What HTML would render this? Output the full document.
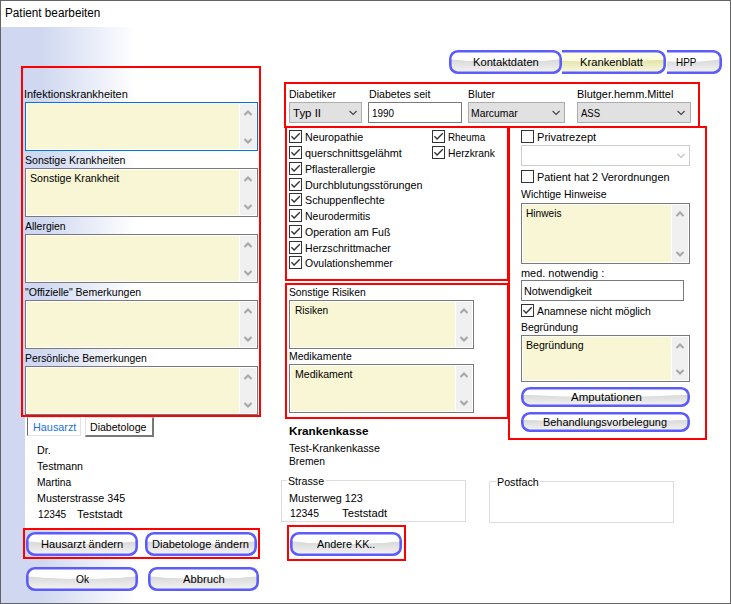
<!DOCTYPE html>
<html><head><meta charset="utf-8"><title>Patient bearbeiten</title><style>
html,body{margin:0;padding:0;width:731px;height:604px;overflow:hidden;background:#fff}
#win{position:absolute;left:0;top:0;width:729px;height:602px;border:1px solid #646464;background:#fff;overflow:hidden}
#body{position:absolute;left:0;top:26px;width:729px;height:576px;background:linear-gradient(to right,#cfd8f0 0px,#cfd8f0 40px,#ffffff 135px)}
#root{position:absolute;left:0;top:0;width:731px;height:604px}
#root>div{position:absolute}
.t{position:absolute;font-family:"Liberation Sans", sans-serif;font-size:11px;line-height:13px;white-space:pre;color:#000;transform-origin:0 0}
.tb{position:absolute;border:1px solid #7a7a7a;background:#fff}
.tb>div{position:absolute}
.ty{background:#f8f6d4}
.sb{background:#f0f0f0}
.cmb{position:absolute;border:1px solid #adadad}
.cb{position:absolute;width:11px;height:11px;border:1px solid #333;background:#fff}
.tabsel{border-left:1px solid #6d6d6d;border-top:1px solid #e3e3e3;border-right:1px solid #e3e3e3;border-bottom:1px solid #e3e3e3;background:#fff}
.tabun{border-left:1px solid #e3e3e3;border-top:1px solid #e3e3e3;border-right:2px solid #787878;border-bottom:2px solid #787878;background:#fff}
</style></head>
<body><div id="win"><div id="body"></div></div><div id="root">
<div class="t" style="left:4.60px;top:7px;font-size:12px;transform:scaleX(0.9790);">Patient bearbeiten</div>
<svg width="113" height="24" style="position:absolute;left:449px;top:50px;overflow:hidden"><defs><linearGradient id="g1" x1="0" y1="0" x2="0" y2="1"><stop offset="0" stop-color="#ffffff"/><stop offset="0.36" stop-color="#ffffff"/><stop offset="0.40" stop-color="#d9d9d9"/><stop offset="1" stop-color="#f4f4f4"/></linearGradient><clipPath id="c1"><rect x="1.3" y="1.3" width="110.4" height="21.4" rx="7.5"/></clipPath></defs><rect x="1.3" y="1.3" width="110.4" height="21.4" rx="7.5" fill="url(#g1)"/><ellipse cx="56.5" cy="0" rx="82.80000000000001" ry="12.0" fill="#ffffff" clip-path="url(#c1)"/><rect x="1.3" y="1.3" width="110.4" height="21.4" rx="7.5" fill="none" stroke="#5c5cfa" stroke-width="2.6"/></svg>
<div class="t" style="left:472.50px;top:56px;transform:scaleX(1.0153);">Kontaktdaten</div>
<svg width="104" height="24" style="position:absolute;left:562px;top:50px;overflow:hidden"><defs><linearGradient id="g2" x1="0" y1="0" x2="0" y2="1"><stop offset="0" stop-color="#fdfde3"/><stop offset="0.38" stop-color="#fbfbd8"/><stop offset="0.42" stop-color="#e3e3aa"/><stop offset="1" stop-color="#f9f9e2"/></linearGradient><clipPath id="c2"><rect x="-18.7" y="1.3" width="121.4" height="21.4" rx="7.5"/></clipPath></defs><rect x="-18.7" y="1.3" width="121.4" height="21.4" rx="7.5" fill="url(#g2)"/><ellipse cx="42.0" cy="0" rx="91.05000000000001" ry="12.0" fill="#fdfde3" clip-path="url(#c2)"/><rect x="-18.7" y="1.3" width="121.4" height="21.4" rx="7.5" fill="none" stroke="#5c5cfa" stroke-width="2.6"/></svg>
<div class="t" style="left:579.70px;top:56px;transform:scaleX(1.0177);">Krankenblatt</div>
<svg width="55" height="24" style="position:absolute;left:667px;top:50px;overflow:hidden"><defs><linearGradient id="g3" x1="0" y1="0" x2="0" y2="1"><stop offset="0" stop-color="#ffffff"/><stop offset="0.36" stop-color="#ffffff"/><stop offset="0.40" stop-color="#d9d9d9"/><stop offset="1" stop-color="#f4f4f4"/></linearGradient><clipPath id="c3"><rect x="-18.7" y="1.3" width="72.4" height="21.4" rx="7.5"/></clipPath></defs><rect x="-18.7" y="1.3" width="72.4" height="21.4" rx="7.5" fill="url(#g3)"/><ellipse cx="17.500000000000004" cy="0" rx="54.300000000000004" ry="12.0" fill="#ffffff" clip-path="url(#c3)"/><rect x="-18.7" y="1.3" width="72.4" height="21.4" rx="7.5" fill="none" stroke="#5c5cfa" stroke-width="2.6"/></svg>
<div class="t" style="left:676.00px;top:56px;transform:scaleX(0.8976);">HPP</div>
<div style="left:21px;top:66px;width:236px;height:347px;border:2px solid #ff0000"></div>
<div class="t" style="left:23.90px;top:88px;">Infektionskrankheiten</div>
<div class="tb" style="left:25px;top:102px;width:231px;height:47px;border-color:#0078d7"><div class="ty" style="left:1px;top:1px;width:212px;height:45px"></div><div class="sb" style="left:214px;top:1px;width:16px;height:45px"><svg width="16" height="45" style="position:absolute;left:0;top:0"><path d="M4.5 11 L8 7.5 L11.5 11" fill="none" stroke="#a6a6a6" stroke-width="2"/><path d="M4.5 35.0 L8 38.5 L11.5 35.0" fill="none" stroke="#a6a6a6" stroke-width="2"/></svg></div></div>
<div class="t" style="left:24.60px;top:154px;transform:scaleX(0.9602);">Sonstige Krankheiten</div>
<div class="tb" style="left:25px;top:168px;width:231px;height:47px;border-color:#7a7a7a"><div class="ty" style="left:1px;top:1px;width:212px;height:45px"></div><div class="sb" style="left:214px;top:1px;width:16px;height:45px"><svg width="16" height="45" style="position:absolute;left:0;top:0"><path d="M4.5 11 L8 7.5 L11.5 11" fill="none" stroke="#a6a6a6" stroke-width="2"/><path d="M4.5 35.0 L8 38.5 L11.5 35.0" fill="none" stroke="#a6a6a6" stroke-width="2"/></svg></div></div>
<div class="t" style="left:24.60px;top:220px;transform:scaleX(0.9488);">Allergien</div>
<div class="tb" style="left:25px;top:234px;width:231px;height:47px;border-color:#7a7a7a"><div class="ty" style="left:1px;top:1px;width:212px;height:45px"></div><div class="sb" style="left:214px;top:1px;width:16px;height:45px"><svg width="16" height="45" style="position:absolute;left:0;top:0"><path d="M4.5 11 L8 7.5 L11.5 11" fill="none" stroke="#a6a6a6" stroke-width="2"/><path d="M4.5 35.0 L8 38.5 L11.5 35.0" fill="none" stroke="#a6a6a6" stroke-width="2"/></svg></div></div>
<div class="t" style="left:25.30px;top:286px;transform:scaleX(0.9570);">"Offizielle" Bemerkungen</div>
<div class="tb" style="left:25px;top:300px;width:231px;height:47px;border-color:#7a7a7a"><div class="ty" style="left:1px;top:1px;width:212px;height:45px"></div><div class="sb" style="left:214px;top:1px;width:16px;height:45px"><svg width="16" height="45" style="position:absolute;left:0;top:0"><path d="M4.5 11 L8 7.5 L11.5 11" fill="none" stroke="#a6a6a6" stroke-width="2"/><path d="M4.5 35.0 L8 38.5 L11.5 35.0" fill="none" stroke="#a6a6a6" stroke-width="2"/></svg></div></div>
<div class="t" style="left:24.60px;top:352px;transform:scaleX(0.9441);">Persönliche Bemerkungen</div>
<div class="tb" style="left:25px;top:366px;width:231px;height:47px;border-color:#7a7a7a"><div class="ty" style="left:1px;top:1px;width:212px;height:45px"></div><div class="sb" style="left:214px;top:1px;width:16px;height:45px"><svg width="16" height="45" style="position:absolute;left:0;top:0"><path d="M4.5 11 L8 7.5 L11.5 11" fill="none" stroke="#a6a6a6" stroke-width="2"/><path d="M4.5 35.0 L8 38.5 L11.5 35.0" fill="none" stroke="#a6a6a6" stroke-width="2"/></svg></div></div>
<div class="t" style="left:30.30px;top:172px;transform:scaleX(0.9656);">Sonstige Krankheit</div>
<div style="left:284px;top:82px;width:412px;height:42px;border:2px solid #ff0000"></div>
<div class="t" style="left:288.80px;top:88px;transform:scaleX(0.9487);">Diabetiker</div>
<div class="t" style="left:368.90px;top:88px;transform:scaleX(0.9649);">Diabetes seit</div>
<div class="t" style="left:467.90px;top:88px;transform:scaleX(0.9390);">Bluter</div>
<div class="t" style="left:576.60px;top:88px;transform:scaleX(0.9911);">Blutger.hemm.Mittel</div>
<div class="cmb" style="left:289px;top:102px;width:71px;height:19px;background:#e1e1e1;border-color:#adadad"><svg width="71" height="19" style="position:absolute;left:0;top:0"><path d="M59.6 8 L63.1 11.4 L66.6 8" fill="none" stroke="#404040" stroke-width="1.05"/></svg></div>
<div class="t" style="left:293.20px;top:107px;transform:scaleX(1.0431);">Typ II</div>
<div class="tb" style="left:368px;top:102px;width:92px;height:19px;border-color:#7a7a7a"></div>
<div class="t" style="left:372.00px;top:107px;transform:scaleX(0.8993);">1990</div>
<div class="cmb" style="left:468px;top:102px;width:95px;height:19px;background:#e1e1e1;border-color:#adadad"><svg width="95" height="19" style="position:absolute;left:0;top:0"><path d="M83.6 8 L87.1 11.4 L90.6 8" fill="none" stroke="#404040" stroke-width="1.05"/></svg></div>
<div class="t" style="left:471.20px;top:107px;transform:scaleX(0.9430);">Marcumar</div>
<div class="cmb" style="left:577px;top:102px;width:112px;height:19px;background:#e1e1e1;border-color:#adadad"><svg width="112" height="19" style="position:absolute;left:0;top:0"><path d="M99.6 8 L103.1 11.4 L106.6 8" fill="none" stroke="#404040" stroke-width="1.05"/></svg></div>
<div class="t" style="left:580.50px;top:107px;transform:scaleX(0.8674);">ASS</div>
<div style="left:285px;top:126px;width:220px;height:151px;border:2px solid #ff0000"></div>
<div class="cb" style="left:289px;top:130px"><svg width="13" height="13" viewBox="0 0 13 13" style="position:absolute;left:-1px;top:-1px"><path d="M2.4 6.3 L5.1 8.9 L10.8 3.2" fill="none" stroke="#333" stroke-width="1.4"/></svg></div>
<div class="t" style="left:304.80px;top:131px;transform:scaleX(0.9697);">Neuropathie</div>
<div class="cb" style="left:289px;top:146px"><svg width="13" height="13" viewBox="0 0 13 13" style="position:absolute;left:-1px;top:-1px"><path d="M2.4 6.3 L5.1 8.9 L10.8 3.2" fill="none" stroke="#333" stroke-width="1.4"/></svg></div>
<div class="t" style="left:304.80px;top:147px;transform:scaleX(0.9829);">querschnittsgelähmt</div>
<div class="cb" style="left:289px;top:162px"><svg width="13" height="13" viewBox="0 0 13 13" style="position:absolute;left:-1px;top:-1px"><path d="M2.4 6.3 L5.1 8.9 L10.8 3.2" fill="none" stroke="#333" stroke-width="1.4"/></svg></div>
<div class="t" style="left:304.80px;top:163px;transform:scaleX(0.9678);">Pflasterallergie</div>
<div class="cb" style="left:289px;top:178px"><svg width="13" height="13" viewBox="0 0 13 13" style="position:absolute;left:-1px;top:-1px"><path d="M2.4 6.3 L5.1 8.9 L10.8 3.2" fill="none" stroke="#333" stroke-width="1.4"/></svg></div>
<div class="t" style="left:304.80px;top:179px;transform:scaleX(0.9805);">Durchblutungsstörungen</div>
<div class="cb" style="left:289px;top:193px"><svg width="13" height="13" viewBox="0 0 13 13" style="position:absolute;left:-1px;top:-1px"><path d="M2.4 6.3 L5.1 8.9 L10.8 3.2" fill="none" stroke="#333" stroke-width="1.4"/></svg></div>
<div class="t" style="left:304.80px;top:194px;transform:scaleX(0.9715);">Schuppenflechte</div>
<div class="cb" style="left:289px;top:209px"><svg width="13" height="13" viewBox="0 0 13 13" style="position:absolute;left:-1px;top:-1px"><path d="M2.4 6.3 L5.1 8.9 L10.8 3.2" fill="none" stroke="#333" stroke-width="1.4"/></svg></div>
<div class="t" style="left:304.80px;top:210px;transform:scaleX(0.9527);">Neurodermitis</div>
<div class="cb" style="left:289px;top:225px"><svg width="13" height="13" viewBox="0 0 13 13" style="position:absolute;left:-1px;top:-1px"><path d="M2.4 6.3 L5.1 8.9 L10.8 3.2" fill="none" stroke="#333" stroke-width="1.4"/></svg></div>
<div class="t" style="left:304.80px;top:226px;transform:scaleX(0.9560);">Operation am Fuß</div>
<div class="cb" style="left:289px;top:241px"><svg width="13" height="13" viewBox="0 0 13 13" style="position:absolute;left:-1px;top:-1px"><path d="M2.4 6.3 L5.1 8.9 L10.8 3.2" fill="none" stroke="#333" stroke-width="1.4"/></svg></div>
<div class="t" style="left:304.80px;top:242px;transform:scaleX(0.9623);">Herzschrittmacher</div>
<div class="cb" style="left:289px;top:256px"><svg width="13" height="13" viewBox="0 0 13 13" style="position:absolute;left:-1px;top:-1px"><path d="M2.4 6.3 L5.1 8.9 L10.8 3.2" fill="none" stroke="#333" stroke-width="1.4"/></svg></div>
<div class="t" style="left:304.80px;top:257px;transform:scaleX(0.9509);">Ovulationshemmer</div>
<div class="cb" style="left:432px;top:130px"><svg width="13" height="13" viewBox="0 0 13 13" style="position:absolute;left:-1px;top:-1px"><path d="M2.4 6.3 L5.1 8.9 L10.8 3.2" fill="none" stroke="#333" stroke-width="1.4"/></svg></div>
<div class="t" style="left:448.10px;top:131px;transform:scaleX(0.8926);">Rheuma</div>
<div class="cb" style="left:432px;top:146px"><svg width="13" height="13" viewBox="0 0 13 13" style="position:absolute;left:-1px;top:-1px"><path d="M2.4 6.3 L5.1 8.9 L10.8 3.2" fill="none" stroke="#333" stroke-width="1.4"/></svg></div>
<div class="t" style="left:448.10px;top:147px;transform:scaleX(0.9344);">Herzkrank</div>
<div style="left:285px;top:283px;width:220px;height:132px;border:2px solid #ff0000"></div>
<div class="t" style="left:288.80px;top:286px;transform:scaleX(0.9363);">Sonstige Risiken</div>
<div class="tb" style="left:289px;top:300px;width:183px;height:47px;border-color:#7a7a7a"><div class="ty" style="left:1px;top:1px;width:164px;height:45px"></div><div class="sb" style="left:166px;top:1px;width:16px;height:45px"><svg width="16" height="45" style="position:absolute;left:0;top:0"><path d="M4.5 11 L8 7.5 L11.5 11" fill="none" stroke="#a6a6a6" stroke-width="2"/><path d="M4.5 35.0 L8 38.5 L11.5 35.0" fill="none" stroke="#a6a6a6" stroke-width="2"/></svg></div></div>
<div class="t" style="left:294.50px;top:304px;transform:scaleX(0.9207);">Risiken</div>
<div class="t" style="left:288.80px;top:350px;transform:scaleX(0.9497);">Medikamente</div>
<div class="tb" style="left:289px;top:364px;width:183px;height:47px;border-color:#7a7a7a"><div class="ty" style="left:1px;top:1px;width:164px;height:45px"></div><div class="sb" style="left:166px;top:1px;width:16px;height:45px"><svg width="16" height="45" style="position:absolute;left:0;top:0"><path d="M4.5 11 L8 7.5 L11.5 11" fill="none" stroke="#a6a6a6" stroke-width="2"/><path d="M4.5 35.0 L8 38.5 L11.5 35.0" fill="none" stroke="#a6a6a6" stroke-width="2"/></svg></div></div>
<div class="t" style="left:294.50px;top:368px;transform:scaleX(0.9606);">Medikament</div>
<div style="left:508px;top:126px;width:195px;height:310px;border:2px solid #ff0000"></div>
<div class="cb" style="left:521px;top:130px"></div>
<div class="t" style="left:536.60px;top:131px;transform:scaleX(1.0080);">Privatrezept</div>
<div class="cmb" style="left:521px;top:145px;width:167px;height:19px;background:#ffffff;border-color:#cccccc"><svg width="167" height="19" style="position:absolute;left:0;top:0"><path d="M155.6 8 L159.1 11.4 L162.6 8" fill="none" stroke="#bfbfbf" stroke-width="1.05"/></svg></div>
<div class="cb" style="left:521px;top:170px"></div>
<div class="t" style="left:536.60px;top:171px;transform:scaleX(0.9894);">Patient hat 2 Verordnungen</div>
<div class="t" style="left:520.60px;top:188px;transform:scaleX(0.9516);">Wichtige Hinweise</div>
<div class="tb" style="left:521px;top:203px;width:167px;height:59px;border-color:#7a7a7a"><div class="ty" style="left:1px;top:1px;width:148px;height:57px"></div><div class="sb" style="left:150px;top:1px;width:16px;height:57px"><svg width="16" height="57" style="position:absolute;left:0;top:0"><path d="M4.5 11 L8 7.5 L11.5 11" fill="none" stroke="#a6a6a6" stroke-width="2"/><path d="M4.5 47.0 L8 50.5 L11.5 47.0" fill="none" stroke="#a6a6a6" stroke-width="2"/></svg></div></div>
<div class="t" style="left:526.30px;top:207px;transform:scaleX(0.9203);">Hinweis</div>
<div class="t" style="left:520.60px;top:267px;transform:scaleX(0.9938);">med. notwendig :</div>
<div class="tb" style="left:521px;top:280px;width:161px;height:19px;border-color:#7a7a7a"></div>
<div class="t" style="left:523.50px;top:285px;transform:scaleX(0.9821);">Notwendigkeit</div>
<div class="cb" style="left:521px;top:304px"><svg width="13" height="13" viewBox="0 0 13 13" style="position:absolute;left:-1px;top:-1px"><path d="M2.4 6.3 L5.1 8.9 L10.8 3.2" fill="none" stroke="#333" stroke-width="1.4"/></svg></div>
<div class="t" style="left:536.60px;top:305px;transform:scaleX(0.9505);">Anamnese nicht möglich</div>
<div class="t" style="left:520.60px;top:321px;transform:scaleX(0.9511);">Begründung</div>
<div class="tb" style="left:521px;top:335px;width:167px;height:45px;border-color:#7a7a7a"><div class="ty" style="left:1px;top:1px;width:148px;height:43px"></div><div class="sb" style="left:150px;top:1px;width:16px;height:43px"><svg width="16" height="43" style="position:absolute;left:0;top:0"><path d="M4.5 11 L8 7.5 L11.5 11" fill="none" stroke="#a6a6a6" stroke-width="2"/><path d="M4.5 33.0 L8 36.5 L11.5 33.0" fill="none" stroke="#a6a6a6" stroke-width="2"/></svg></div></div>
<div class="t" style="left:526.30px;top:339px;transform:scaleX(0.9595);">Begründung</div>
<svg width="169" height="20" style="position:absolute;left:521px;top:387px;overflow:hidden"><defs><linearGradient id="g4" x1="0" y1="0" x2="0" y2="1"><stop offset="0" stop-color="#ffffff"/><stop offset="0.36" stop-color="#ffffff"/><stop offset="0.40" stop-color="#d9d9d9"/><stop offset="1" stop-color="#f4f4f4"/></linearGradient><clipPath id="c4"><rect x="1.3" y="1.3" width="166.4" height="17.4" rx="7.5"/></clipPath></defs><rect x="1.3" y="1.3" width="166.4" height="17.4" rx="7.5" fill="url(#g4)"/><ellipse cx="84.5" cy="0" rx="124.80000000000001" ry="10.0" fill="#ffffff" clip-path="url(#c4)"/><rect x="1.3" y="1.3" width="166.4" height="17.4" rx="7.5" fill="none" stroke="#5c5cfa" stroke-width="2.6"/></svg>
<div class="t" style="left:570.70px;top:391px;transform:scaleX(1.0434);">Amputationen</div>
<svg width="169" height="20" style="position:absolute;left:521px;top:412px;overflow:hidden"><defs><linearGradient id="g5" x1="0" y1="0" x2="0" y2="1"><stop offset="0" stop-color="#ffffff"/><stop offset="0.36" stop-color="#ffffff"/><stop offset="0.40" stop-color="#d9d9d9"/><stop offset="1" stop-color="#f4f4f4"/></linearGradient><clipPath id="c5"><rect x="1.3" y="1.3" width="166.4" height="17.4" rx="7.5"/></clipPath></defs><rect x="1.3" y="1.3" width="166.4" height="17.4" rx="7.5" fill="url(#g5)"/><ellipse cx="84.5" cy="0" rx="124.80000000000001" ry="10.0" fill="#ffffff" clip-path="url(#c5)"/><rect x="1.3" y="1.3" width="166.4" height="17.4" rx="7.5" fill="none" stroke="#5c5cfa" stroke-width="2.6"/></svg>
<div class="t" style="left:543.40px;top:416px;transform:scaleX(0.9940);">Behandlungsvorbelegung</div>
<div class="t" style="left:289.40px;top:425px;font-weight:bold;transform:scaleX(1.0646);">Krankenkasse</div>
<div class="t" style="left:289.40px;top:442px;transform:scaleX(0.9719);">Test-Krankenkasse</div>
<div class="t" style="left:289.40px;top:455px;transform:scaleX(0.9323);">Bremen</div>
<div style="left:281px;top:480px;width:183px;height:40px;border:1px solid #dcdcdc"></div>
<div style="left:287px;top:479px;width:39px;height:4px;background:#fff"></div>
<div class="t" style="left:288.20px;top:475px;transform:scaleX(0.9684);">Strasse</div>
<div class="t" style="left:288.80px;top:492px;transform:scaleX(0.9815);">Musterweg 123</div>
<div class="t" style="left:289.70px;top:507px;transform:scaleX(0.9452);">12345</div>
<div class="t" style="left:342.40px;top:507px;transform:scaleX(1.0235);">Teststadt</div>
<div style="left:489px;top:481px;width:183px;height:40px;border:1px solid #dcdcdc"></div>
<div style="left:496px;top:480px;width:44px;height:4px;background:#fff"></div>
<div class="t" style="left:496.50px;top:476px;transform:scaleX(0.9746);">Postfach</div>
<div style="left:287px;top:525px;width:115px;height:32px;border:2px solid #ff0000"></div>
<svg width="112" height="24" style="position:absolute;left:290px;top:532px;overflow:hidden"><defs><linearGradient id="g6" x1="0" y1="0" x2="0" y2="1"><stop offset="0" stop-color="#ffffff"/><stop offset="0.36" stop-color="#ffffff"/><stop offset="0.40" stop-color="#d9d9d9"/><stop offset="1" stop-color="#f4f4f4"/></linearGradient><clipPath id="c6"><rect x="1.3" y="1.3" width="109.4" height="21.4" rx="7.5"/></clipPath></defs><rect x="1.3" y="1.3" width="109.4" height="21.4" rx="7.5" fill="url(#g6)"/><ellipse cx="56.0" cy="0" rx="82.05000000000001" ry="12.0" fill="#ffffff" clip-path="url(#c6)"/><rect x="1.3" y="1.3" width="109.4" height="21.4" rx="7.5" fill="none" stroke="#5c5cfa" stroke-width="2.6"/></svg>
<div class="t" style="left:316.50px;top:538px;transform:scaleX(0.9839);">Andere KK..</div>
<div style="left:25px;top:417px;width:234px;height:111px;background:#fff"></div>
<div class="tabsel" style="left:27px;top:417px;width:52px;height:17px"></div>
<div class="t" style="left:32.50px;top:421px;color:#1a73d9;transform:scaleX(0.9850);">Hausarzt</div>
<div class="tabun" style="left:85px;top:417px;width:66px;height:17px"></div>
<div class="t" style="left:90.40px;top:421px;transform:scaleX(0.9609);">Diabetologe</div>
<div class="t" style="left:37.00px;top:444px;transform:scaleX(0.9714);">Dr.</div>
<div class="t" style="left:37.00px;top:460px;transform:scaleX(0.9648);">Testmann</div>
<div class="t" style="left:37.00px;top:476px;transform:scaleX(0.9318);">Martina</div>
<div class="t" style="left:37.00px;top:492px;transform:scaleX(0.9738);">Musterstrasse 345</div>
<div class="t" style="left:37.80px;top:508px;transform:scaleX(0.9222);">12345</div>
<div class="t" style="left:77.40px;top:508px;transform:scaleX(1.0326);">Teststadt</div>
<div style="left:23px;top:528px;width:233px;height:27px;border:2px solid #ff0000"></div>
<svg width="112" height="24" style="position:absolute;left:26px;top:532px;overflow:hidden"><defs><linearGradient id="g7" x1="0" y1="0" x2="0" y2="1"><stop offset="0" stop-color="#ffffff"/><stop offset="0.36" stop-color="#ffffff"/><stop offset="0.40" stop-color="#d9d9d9"/><stop offset="1" stop-color="#f4f4f4"/></linearGradient><clipPath id="c7"><rect x="1.3" y="1.3" width="109.4" height="21.4" rx="7.5"/></clipPath></defs><rect x="1.3" y="1.3" width="109.4" height="21.4" rx="7.5" fill="url(#g7)"/><ellipse cx="56.0" cy="0" rx="82.05000000000001" ry="12.0" fill="#ffffff" clip-path="url(#c7)"/><rect x="1.3" y="1.3" width="109.4" height="21.4" rx="7.5" fill="none" stroke="#5c5cfa" stroke-width="2.6"/></svg>
<div class="t" style="left:41.40px;top:538px;transform:scaleX(1.0110);">Hausarzt ändern</div>
<svg width="112" height="24" style="position:absolute;left:145px;top:532px;overflow:hidden"><defs><linearGradient id="g8" x1="0" y1="0" x2="0" y2="1"><stop offset="0" stop-color="#ffffff"/><stop offset="0.36" stop-color="#ffffff"/><stop offset="0.40" stop-color="#d9d9d9"/><stop offset="1" stop-color="#f4f4f4"/></linearGradient><clipPath id="c8"><rect x="1.3" y="1.3" width="109.4" height="21.4" rx="7.5"/></clipPath></defs><rect x="1.3" y="1.3" width="109.4" height="21.4" rx="7.5" fill="url(#g8)"/><ellipse cx="56.0" cy="0" rx="82.05000000000001" ry="12.0" fill="#ffffff" clip-path="url(#c8)"/><rect x="1.3" y="1.3" width="109.4" height="21.4" rx="7.5" fill="none" stroke="#5c5cfa" stroke-width="2.6"/></svg>
<div class="t" style="left:152.30px;top:538px;transform:scaleX(1.0104);">Diabetologe ändern</div>
<svg width="112" height="24" style="position:absolute;left:26px;top:567px;overflow:hidden"><defs><linearGradient id="g9" x1="0" y1="0" x2="0" y2="1"><stop offset="0" stop-color="#ffffff"/><stop offset="0.36" stop-color="#ffffff"/><stop offset="0.40" stop-color="#d9d9d9"/><stop offset="1" stop-color="#f4f4f4"/></linearGradient><clipPath id="c9"><rect x="1.3" y="1.3" width="109.4" height="21.4" rx="7.5"/></clipPath></defs><rect x="1.3" y="1.3" width="109.4" height="21.4" rx="7.5" fill="url(#g9)"/><ellipse cx="56.0" cy="0" rx="82.05000000000001" ry="12.0" fill="#ffffff" clip-path="url(#c9)"/><rect x="1.3" y="1.3" width="109.4" height="21.4" rx="7.5" fill="none" stroke="#5c5cfa" stroke-width="2.6"/></svg>
<div class="t" style="left:75.60px;top:573px;transform:scaleX(0.9274);">Ok</div>
<svg width="111" height="24" style="position:absolute;left:148px;top:567px;overflow:hidden"><defs><linearGradient id="g10" x1="0" y1="0" x2="0" y2="1"><stop offset="0" stop-color="#ffffff"/><stop offset="0.36" stop-color="#ffffff"/><stop offset="0.40" stop-color="#d9d9d9"/><stop offset="1" stop-color="#f4f4f4"/></linearGradient><clipPath id="c10"><rect x="1.3" y="1.3" width="108.4" height="21.4" rx="7.5"/></clipPath></defs><rect x="1.3" y="1.3" width="108.4" height="21.4" rx="7.5" fill="url(#g10)"/><ellipse cx="55.5" cy="0" rx="81.30000000000001" ry="12.0" fill="#ffffff" clip-path="url(#c10)"/><rect x="1.3" y="1.3" width="108.4" height="21.4" rx="7.5" fill="none" stroke="#5c5cfa" stroke-width="2.6"/></svg>
<div class="t" style="left:183.00px;top:573px;transform:scaleX(1.0183);">Abbruch</div>
</div></body></html>
